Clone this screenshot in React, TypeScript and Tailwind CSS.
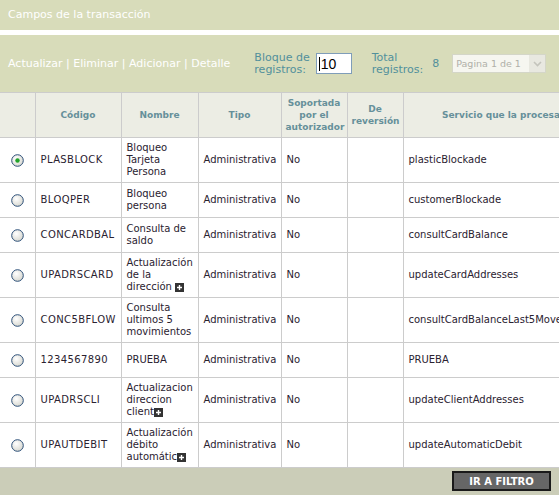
import React from "react";

type Row = {
  code: string;
  name: string[];
  more?: boolean;
  service: string;
  checked?: boolean;
};

const rows: Row[] = [
  { code: "PLASBLOCK", name: ["Bloqueo", "Tarjeta", "Persona"], service: "plasticBlockade", checked: true },
  { code: "BLOQPER", name: ["Bloqueo", "persona"], service: "customerBlockade" },
  { code: "CONCARDBAL", name: ["Consulta de", "saldo"], service: "consultCardBalance" },
  { code: "UPADRSCARD", name: ["Actualización", "de la", "dirección "], more: true, service: "updateCardAddresses" },
  { code: "CONC5BFLOW", name: ["Consulta", "ultimos 5", "movimientos"], service: "consultCardBalanceLast5Movements" },
  { code: "1234567890", name: ["PRUEBA"], service: "PRUEBA" },
  { code: "UPADRSCLI", name: ["Actualizacion", "direccion", "client"], more: true, service: "updateClientAddresses" },
  { code: "UPAUTDEBIT", name: ["Actualización", "débito", "automátic"], more: true, service: "updateAutomaticDebit" },
];

function Radio({ checked }: { checked?: boolean }) {
  const id = checked ? "rg1" : "rg0";
  return (
    <svg width="13" height="13" viewBox="0 0 13 13" className="block">
      <defs>
        <radialGradient id={id} cx="40%" cy="35%" r="70%">
          <stop offset="0%" stopColor="#ffffff" />
          <stop offset="100%" stopColor="#d6d6ce" />
        </radialGradient>
      </defs>
      <circle cx="6.5" cy="6.5" r="5.8" fill={`url(#${id})`} stroke="#2c4f78" strokeWidth="1" />
      {checked && <circle cx="6.5" cy="6.5" r="2.2" fill="#22a32a" />}
    </svg>
  );
}

function Plus() {
  return (
    <span className="inline-flex h-[9px] w-[9px] items-center justify-center bg-[#333] align-middle">
      <svg width="7" height="7" viewBox="0 0 7 7">
        <path d="M3.5 1v5M1 3.5h5" stroke="#fff" strokeWidth="1.4" />
      </svg>
    </span>
  );
}

export default function App() {
  const sans = "font-['DejaVu_Sans',Verdana,sans-serif]";
  const th = "border border-[#cccccc] px-1 text-center align-middle text-[9px] font-bold leading-[12px] text-[#66909a]";
  const td = "border border-[#cccccc] px-[5px] py-1 align-middle text-[10px] leading-[12px] text-[#2a2230]";

  return (
    <div className={`h-[495px] w-[559px] overflow-hidden bg-white ${sans}`}>
      <div className="flex h-[30px] items-center bg-[#d8dcba] px-2 pt-px text-[11px] text-white">Campos de la transacción</div>
      <div className="h-[5px] bg-white" />
      <div className="flex h-[57px] items-center bg-[#d8dcba] pl-2 text-[11px] leading-[12px]">
        <span className="text-white">Actualizar | Eliminar | Adicionar | Detalle</span>
        <span className="ml-[24px] text-[#52909c]">
          Bloque de
          <br />
          registros:
        </span>
        <div className="ml-[6px] flex h-[21px] w-[36px] items-center border border-[#7f9db9] bg-white pl-[2px] font-['Liberation_Sans',Arial,sans-serif] text-[14px] text-black">
          <span className="mr-[1px] h-[14px] w-px bg-black" />
          10
        </div>
        <span className="ml-[20px] text-[#52909c]">
          Total
          <br />
          registros:
        </span>
        <span className="ml-[9px] text-[#52909c]">8</span>
        <div className="ml-[13px] flex h-[19px] w-[94px] items-center border border-[#d4d6c8] bg-[#f6f6f0]">
          <span className="flex-1 pl-[3px] text-[9.5px] text-[#b0b0a8]">Pagina 1 de 1</span>
          <span className="flex h-[17px] w-[16px] items-center justify-center bg-[#e8e8e0]">
            <svg width="9" height="6" viewBox="0 0 9 6">
              <path d="M1 1l3.5 3.5L8 1" fill="none" stroke="#c4c4bc" strokeWidth="1.6" />
            </svg>
          </span>
        </div>
      </div>
      <table className="w-[599px] table-fixed border-collapse">
        <colgroup>
          <col className="w-[35px]" />
          <col className="w-[86px]" />
          <col className="w-[77px]" />
          <col className="w-[83px]" />
          <col className="w-[66px]" />
          <col className="w-[56px]" />
          <col className="w-[196px]" />
        </colgroup>
        <thead>
          <tr className="h-[45px] bg-[#ecede4]">
            <th className={`${th} border-l-0`} />
            <th className={th}>Código</th>
            <th className={th}>Nombre</th>
            <th className={th}>Tipo</th>
            <th className={th}>
              Soportada
              <br />
              por el
              <br />
              autorizador
            </th>
            <th className={th}>
              De
              <br />
              reversión
            </th>
            <th className={`${th} whitespace-nowrap`}>Servicio que la procesa</th>
          </tr>
        </thead>
        <tbody>
          {rows.map((r) => (
            <tr key={r.code} className="h-[35px] bg-white">
              <td className={`${td} border-l-0`}>
                <div className="flex justify-center">
                  <Radio checked={r.checked} />
                </div>
              </td>
              <td className={`${td} tracking-[0.4px]`}>{r.code}</td>
              <td className={td}>
                {r.name.map((n, i) => (
                  <div key={i} className="whitespace-nowrap">
                    {n}
                    {r.more && i === r.name.length - 1 && <Plus />}
                  </div>
                ))}
              </td>
              <td className={td}>Administrativa</td>
              <td className={td}>No</td>
              <td className={td} />
              <td className={`${td} whitespace-nowrap`}>{r.service}</td>
            </tr>
          ))}
        </tbody>
      </table>
      <div className="flex h-[28px] items-start justify-end bg-[#cbcdb8] pr-2 pt-[3px]">
        <button className="h-[20px] w-[99px] border-2 border-[#1a1a1a] bg-[#666666] text-[10px] font-bold text-white">
          IR A FILTRO
        </button>
      </div>
    </div>
  );
}
